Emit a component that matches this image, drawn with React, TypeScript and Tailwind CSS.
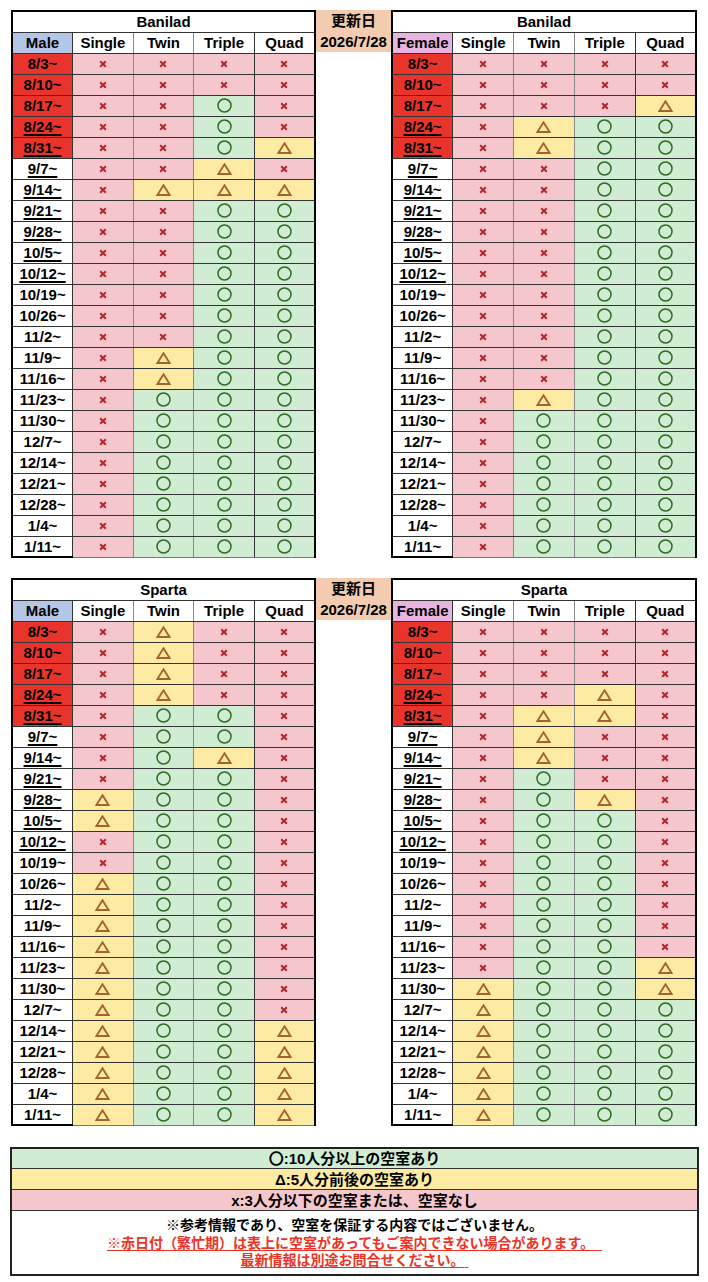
type Mark = "x" | "o" | "t";

const DATES = [
  "8/3~", "8/10~", "8/17~", "8/24~", "8/31~", "9/7~", "9/14~", "9/21~",
  "9/28~", "10/5~", "10/12~", "10/19~", "10/26~", "11/2~", "11/9~", "11/16~",
  "11/23~", "11/30~", "12/7~", "12/14~", "12/21~", "12/28~", "1/4~", "1/11~",
];

const rep = (s: string, n: number) => Array.from({ length: n }, () => s);

// one string per week: Single, Twin, Triple, Quad
const BANILAD_MALE = [
  "xxxx", "xxxx", "xxox", "xxox", "xxot", "xxtx", "xttt",
  ...rep("xxoo", 7), "xtoo", "xtoo", ...rep("xooo", 8),
];
const BANILAD_FEMALE = [
  "xxxx", "xxxx", "xxxt", "xtoo", "xtoo",
  ...rep("xxoo", 11), "xtoo", ...rep("xooo", 7),
];
const SPARTA_MALE = [
  ...rep("xtxx", 4), "xoox", "xoox", "xotx", "xoox", "toox", "toox", "xoox", "xoox",
  ...rep("toox", 7), ...rep("toot", 5),
];
const SPARTA_FEMALE = [
  "xxxx", "xxxx", "xxxx", "xxtx", "xttx", "xtxx", "xtxx", "xoxx", "xotx",
  ...rep("xoox", 7), "xoot", "toot", ...rep("tooo", 6),
];

const cellBg: Record<Mark, string> = {
  x: "bg-[#f5c7cc]",
  o: "bg-[#d0edd3]",
  t: "bg-[#fdeba4]",
};

function MarkIcon({ m }: { m: Mark }) {
  if (m === "o") {
    return (
      <svg width="15" height="15" viewBox="0 0 15 15" className="mx-auto block">
        <circle cx="7.5" cy="7.5" r="6.5" fill="none" stroke="#2f6b22" strokeWidth="1.5" />
      </svg>
    );
  }
  if (m === "t") {
    return (
      <svg width="15" height="12" viewBox="0 0 15 12" className="mx-auto block">
        <path d="M7.5 1.3 L13.6 11 L1.4 11 Z" fill="none" stroke="#a5622b" strokeWidth="1.9" />
      </svg>
    );
  }
  return (
    <svg width="8" height="8" viewBox="0 0 8 8" className="mx-auto block">
      <path d="M1.2 1.2 L6.8 6.8 M6.8 1.2 L1.2 6.8" stroke="#b0262c" strokeWidth="2" />
    </svg>
  );
}

const COLS = ["Single", "Twin", "Triple", "Quad"];

function RoomTable({
  name,
  gender,
  data,
  width,
}: {
  name: string;
  gender: "Male" | "Female";
  data: string[];
  width: string;
}) {
  return (
    <table className={`border-collapse table-fixed ${width} border-t-2 border-x-2 border-black`}>
      <tbody>
        <tr className="h-[21px]">
          <td colSpan={5} className="p-0 border-b border-[#333] bg-white text-center font-bold text-[15px] leading-none">
            {name}
          </td>
        </tr>
        <tr className="h-[21px]">
          <td
            className={`p-0 border border-[#333] text-center font-bold text-[15px] leading-none ${
              gender === "Male" ? "bg-[#b4c6e7]" : "bg-[#e7b4e1]"
            }`}
          >
            {gender}
          </td>
          {COLS.map((c, i) => (
            <td
              key={c}
              className={`p-0 border border-[#333] bg-white text-center font-bold text-[15px] leading-none ${
                i < 2 ? "border-r-[#8a8a8a]" : ""
              }`}
            >
              {c}
            </td>
          ))}
        </tr>
        {DATES.map((d, r) => {
          const last = r === DATES.length - 1;
          return (
            <tr key={d} className="h-[21px]">
              <td
                className={`p-0 border border-[#333] text-center font-bold text-[15px] leading-none ${
                  r < 5 ? "bg-[#e8342b]" : "bg-white"
                } ${last ? "border-b-2 border-b-black" : ""}`}
              >
                <span className={r >= 3 && r <= 10 ? "underline decoration-2 underline-offset-2" : ""}>{d}</span>
              </td>
              {data[r].split("").map((m, i) => (
                <td
                  key={i}
                  className={`p-0 border border-[#333] ${cellBg[m as Mark]} ${
                    i < 2 ? "border-r-[#8a8a8a]" : ""
                  } ${last ? "border-b-[#777]" : ""}`}
                >
                  <MarkIcon m={m as Mark} />
                </td>
              ))}
            </tr>
          );
        })}
      </tbody>
    </table>
  );
}

function Updated() {
  return (
    <div className="w-[75px] h-[42px] bg-[#f2cbb0] flex flex-col items-center justify-center font-bold text-[15px] leading-[21px]">
      <span>更新日</span>
      <span>2026/7/28</span>
    </div>
  );
}

function Block({ name, male, female }: { name: string; male: string[]; female: string[] }) {
  return (
    <div className="flex items-start">
      <RoomTable name={name} gender="Male" data={male} width="w-[305px]" />
      <Updated />
      <RoomTable name={name} gender="Female" data={female} width="w-[306px]" />
    </div>
  );
}

export default function App() {
  return (
    <div className="w-[708px] min-h-[1282px] bg-white pt-[10px] pl-[11px] text-black font-['Liberation_Sans','Noto_Sans_CJK_JP',sans-serif]">
      <Block name="Banilad" male={BANILAD_MALE} female={BANILAD_FEMALE} />
      <div className="mt-[20px]">
        <Block name="Sparta" male={SPARTA_MALE} female={SPARTA_FEMALE} />
      </div>

      <div className="mt-[21px] -ml-px w-[689px] border-2 border-[#222] text-center font-bold">
        <div className="h-[20px] bg-[#d0edd3] border-b border-[#333] text-[15px] leading-[20px]">
          〇:10人分以上の空室あり
        </div>
        <div className="h-[21px] bg-[#fdeba4] border-b border-[#333] text-[15px] leading-[21px]">
          Δ:5人分前後の空室あり
        </div>
        <div className="h-[21px] bg-[#f5c7cc] border-b border-[#333] text-[15px] leading-[21px]">
          x:3人分以下の空室または、空室なし
        </div>
        <div className="pt-[6px] pb-[4px] text-[14px] leading-[17.5px]">
          <p>※参考情報であり、空室を保証する内容ではございません。</p>
          <p className="text-[#ee3324] underline decoration-1 underline-offset-2">
            ※赤日付（繁忙期）は表上に空室があってもご案内できない場合があります。{"\u00a0\u00a0"}
          </p>
          <p className="text-[#ee3324] underline decoration-1 underline-offset-2">
            最新情報は別途お問合せください。{"\u00a0"}
          </p>
        </div>
      </div>
    </div>
  );
}
